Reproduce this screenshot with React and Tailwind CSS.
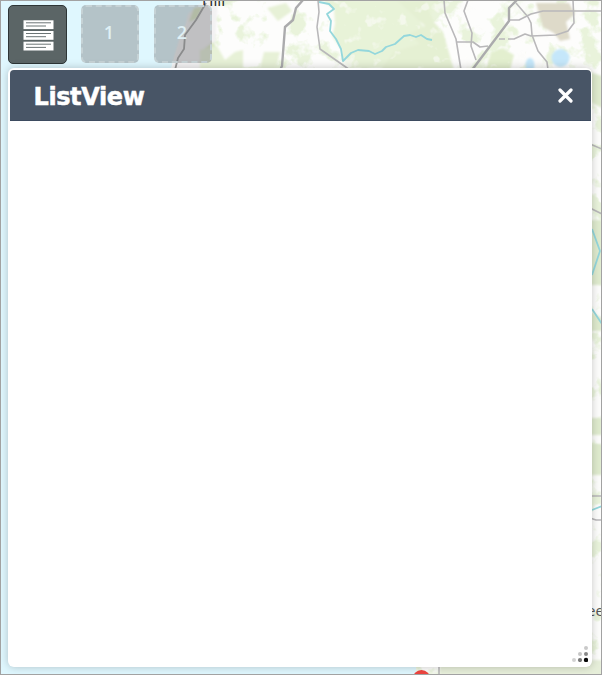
import React from "react";

const slot =
  "flex size-[58px] items-center justify-center rounded-[5px] border-2 border-dashed border-[#c6d2d5] bg-[#727678]/40 pb-1 pr-[2px] font-['Open_Sans',sans-serif] text-[18px] font-semibold text-[#dff0f5]";

function MapCanvas() {
  return (
    <svg className="absolute inset-0" width="602" height="675" viewBox="0 0 602 675">
      <defs>
        <filter id="patch" x="0" y="0" width="100%" height="100%" colorInterpolationFilters="sRGB">
          <feTurbulence type="fractalNoise" baseFrequency="0.045" numOctaves="4" seed="8" />
          <feColorMatrix values="0 0 0 0 0.90  0 0 0 0 0.95  0 0 0 0 0.84  8 0 0 0 -4.1" />
        </filter>
        <filter id="clearing" x="0" y="0" width="100%" height="100%" colorInterpolationFilters="sRGB">
          <feTurbulence type="fractalNoise" baseFrequency="0.07" numOctaves="3" seed="21" />
          <feColorMatrix values="0 0 0 0 0.99  0 0 0 0 0.99  0 0 0 0 0.98  8 0 0 0 -4.8" />
        </filter>
        <filter id="soft"><feGaussianBlur stdDeviation="1.2" /></filter>
      </defs>
      <rect width="602" height="675" fill="#fdfdfc" />
      <rect x="200" width="402" height="675" filter="url(#patch)" opacity=".85" />
      <path d="M0 0H207L190 15 182 34 175 55 170 72H210V660H416V675H0Z" fill="#dff7fe" />
      <g filter="url(#soft)">
        <path d="M207 0L196 7 188 14 185 27 179 40 174 57 172 72H200L215 45 218 0Z" fill="#f3f2f3" />
        <path d="M194 8L202 7 198 18 189 22ZM203 50L213 42 220 53 211 65 200 59Z" fill="#dce9c3" />
        <path d="M322 0H438L431 16 420 22 432 37 420 68H350L343 61 341 49 332 36 335 24 334 9Z" fill="#e8f3d8" />
        <path d="M397 0H424L434 22 443 32 454 70H381L394 52 420 44 410 34 425 26Z" fill="#e5f0d3" />
        <path d="M200 50L217 46 225 60 235 52 243 50V68H260L264 52 280 52 275 70H200ZM267 8L286 3 292 11 278 21Z" fill="#e7f1d7" />
        <path d="M491 53L502 48 514 55 510 70H485Z" fill="#e3efcf" />
        <path d="M440 660H602V675H440Z" fill="#e6eed9" />
        <path d="M581 69L602 76V108L592 103ZM590 220H602V285H590ZM590 418H602V435H590ZM590 444H602V475H590ZM590 311L602 318V331H590Z" fill="#dfebce" />
      </g>
      <rect x="330" width="272" height="70" filter="url(#clearing)" opacity=".6" />
      <g filter="url(#soft)">
        <path d="M536 3H569L575 14 566 22 570 39 560 41 554 33 543 27Z" fill="#dedac9" />
        <ellipse cx="560.5" cy="58" rx="9" ry="9" fill="#c5e7fa" />
        <ellipse cx="530" cy="65" rx="4.5" ry="7" fill="#c5e7fa" />
      </g>
      <g fill="none" stroke="#94d7dc" strokeWidth="1.8" strokeLinejoin="round">
        <path d="M319 2L329 4 334 9 327 14 331 21 330 31 336 39 341 49 343 61 351 53 358 50 369 51 375 54 382 51 386 47 395 44 404 36 410 35 416 37 421 35 427 39 432 40" />
        <path d="M592 229L600 251 592 275M592 309L602 324M592 510L602 506" />
      </g>
      <g fill="none" stroke="#b9b8ba" strokeWidth="1.6" strokeLinejoin="round">
        <path d="M318 0L319 12 317 27 320 49 350 70" />
        <path d="M444 0L445 13 456 39 461 70M468 0L464 11 472 33 471 46 476 60M456 42H473L480 47 488 46M509 20H519L531 14 543 11H602M516 3L528 17 531 23 532 35 538 51 547 62 548 70M508 39H514L525 34 531 36 556 35 568 31 574 23 573 0M499 39H505" />
        <path d="M590 144L602 149M590 208L602 214M590 496H602M590 518L596 520 602 520M439 660V675" />
      </g>
      <g fill="none" stroke="#ababad" strokeWidth="2.4" strokeLinejoin="round">
        <path d="M303 0L296 8 293 20 285 27 282 66 279 72M517 0L509 8V21L472 70" />
      </g>
      <path d="M206 3L196 20 185 35 184 49 178 58 175 70" fill="none" stroke="#999" strokeWidth="1.8" />
      <circle cx="421.5" cy="679" r="9" fill="#ee4540" />
    </svg>
  );
}

function ListIcon() {
  return (
    <svg width="31" height="31" viewBox="0 0 31 31">
      {[0, 10.7, 21.4].map((y) => (
        <g key={y}>
          <rect x="0.5" y={y + 0.3} width="30" height="8.8" fill="#fff" />
          <path d={`M3 ${y + 2.8}H28M3 ${y + 6}H23`} stroke="#6b7475" strokeWidth="1" />
        </g>
      ))}
    </svg>
  );
}

function ResizeGrip() {
  return (
    <svg width="16" height="16" viewBox="0 0 16 16">
      <circle cx="14" cy="2" r="2" fill="#c9c9c9" />
      <circle cx="8" cy="8" r="2" fill="#c7c7c7" />
      <circle cx="14" cy="8" r="2" fill="#898989" />
      <circle cx="2" cy="14" r="2" fill="#d2d2d2" />
      <circle cx="8" cy="14" r="2.1" fill="#777" />
      <circle cx="14" cy="14" r="2.2" fill="#080808" />
    </svg>
  );
}

export default function App() {
  return (
    <div className="relative h-[675px] w-[602px] overflow-hidden">
      <MapCanvas />
      <span className="absolute left-[202px] top-[-10px] font-['Open_Sans',sans-serif] text-[15.5px] leading-[21px] text-[#222]">Hill</span>
      <span className="absolute left-[587px] top-[600px] font-['Open_Sans',sans-serif] text-[15px] leading-[20px] text-[#555]">ee</span>
      <div className="relative flex h-full flex-col pl-2 pr-[10px] pt-[5px]">
        <nav className="flex gap-[15px]">
          <button className="mr-[-1px] flex size-[59px] items-center justify-center rounded-[5px] border-[1.5px] border-[#2d3536] bg-[#5b6566] pl-[2px] pt-[2px]">
            <ListIcon />
          </button>
          <div className={slot}>1</div>
          <div className={slot}>2</div>
        </nav>
        <section className="mt-1 flex h-[599px] w-[584px] flex-col rounded-[6px] bg-white px-[1.5px] pt-[1.5px] shadow-[0_0_8px_rgba(0,0,0,0.22)]">
          <header className="flex h-[51.5px] items-center justify-between rounded-t-[4px] border-b border-[#3d4b60] bg-[#485566] pl-[24px] pr-[17.5px]">
            <h1 className="pt-[5px] font-['DejaVu_Sans',sans-serif] text-[24px] font-bold leading-none tracking-[-0.4px] text-white [-webkit-text-stroke:0.5px_white]">ListView</h1>
            <svg className="mt-[2px]" width="15" height="15" viewBox="0 0 15 15" fill="none" stroke="#fff" strokeWidth="3.2" strokeLinecap="round">
              <path d="M2 2L13 13M13 2L2 13" />
            </svg>
          </header>
          <div className="flex flex-1 items-end justify-end pb-[5px] pr-[3px]">
            <ResizeGrip />
          </div>
        </section>
      </div>
      <div className="pointer-events-none absolute inset-0 border border-[#a2a2a2]" />
    </div>
  );
}
